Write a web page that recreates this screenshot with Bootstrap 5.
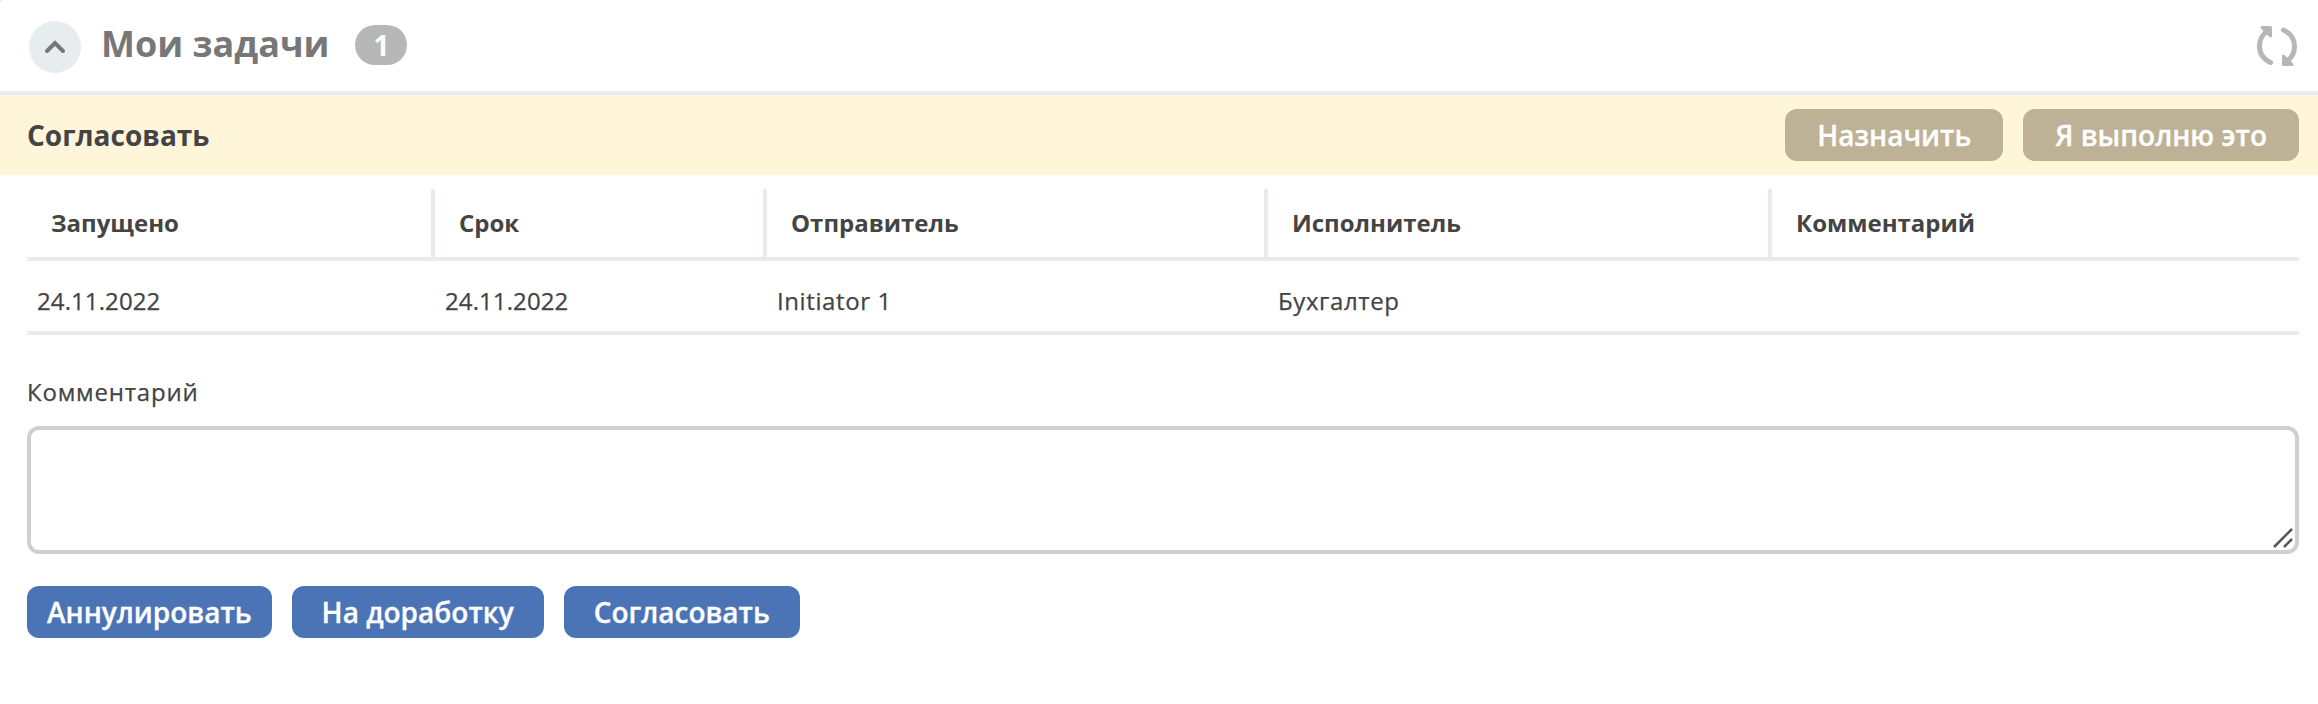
<!DOCTYPE html>
<html lang="ru">
<head>
<meta charset="utf-8">
<meta name="viewport" content="width=device-width, initial-scale=1">
<title>Мои задачи</title>
<link rel="stylesheet" href="https://cdn.jsdelivr.net/npm/bootstrap@5.3.0/dist/css/bootstrap.min.css">
<style>
  body { font-family: "Open Sans", "Noto Sans", sans-serif; font-size: 24px; line-height: 36px; color: #444; background: #fff; overflow: hidden; }
  .panel-head { height: 95px; padding: 0 19px 4px 29px; border-bottom: 4px solid #e7ecef; background: radial-gradient(circle at 4px 4px, #fff 4px, #ddd 5px) 0 0 / 4px 4px no-repeat; }
  .toggle-btn { width: 52px; height: 52px; background: #e7edef; margin-top: 7px; }
  .panel-title { font-size: 36px; line-height: 48px; color: #777; margin: 0 0 0 20px; }
  .count-pill { width: 52px; height: 40px; font-size: 28px; line-height: 41px; background: #b7b7b7; margin: 3px 0 0 26px; padding: 0; }
  .refresh { margin-top: 5px; }
  .task-bar { height: 80px; padding: 0 19px 0 27px; background: #fff5d9; }
  .task-name { font-size: 28px; }
  .act { height: 52px; padding: 1px 30px 0; border: 0; border-radius: 12px; font-size: 28px; line-height: 51px; font-weight: 600; color: #fff; white-space: nowrap; -webkit-text-stroke: .3px #fff; }
  .act-sand { background: #bdb295; padding: 1px 32px 0; }
  .act-blue { background: #4b74b7; }
  .panel-body { padding: 14px 19px 0 27px; }
  .task-table { table-layout: fixed; margin: 0; color: #444; border-collapse: separate; border-spacing: 0; }
  .task-table th { height: 72px; padding: 0 24px 0; font-weight: 700; border: 0 solid #e7edef; border-width: 0 4px 4px 0; vertical-align: middle; color: #444; }
  .task-table th:last-child { border-right: 0; }
  .task-table td { height: 74px; padding: 9px 10px 0; border: 0 solid #e7edef; border-bottom-width: 4px; vertical-align: middle; color: #444; letter-spacing: .6px; -webkit-text-stroke: .25px #444; }
  .task-table td.date { letter-spacing: .1px; }
  .note-label { margin: 39px 0 0; height: 52px; letter-spacing: .8px; -webkit-text-stroke: .25px #444; }
  .note-box { height: 128px; border: 4px solid #cfcfcf; border-radius: 12px; resize: none; }
  .grip { right: 6px; bottom: 6px; }
</style>
</head>
<body>
<header class="panel-head d-flex align-items-center">
  <button class="toggle-btn btn rounded-circle border-0 p-0 d-flex" aria-label="Свернуть">
    <svg width="52" height="52" viewBox="0 0 52 52" fill="none" stroke="#777" stroke-width="4" stroke-linecap="round"><path d="M18 30l8-8 8 8"/></svg>
  </button>
  <h1 class="panel-title fw-bold">Мои задачи</h1>
  <span class="count-pill badge rounded-pill fw-bold">1</span>
  <svg class="refresh ms-auto" width="44" height="44" viewBox="0 0 44 44" fill="none" stroke="#b7b7b7" stroke-linecap="round" stroke-linejoin="round"><path stroke-width="5" d="M15.500 38.500C8 35 4.500 28.500 4.500 22C4.500 15 8 10 12.500 7M28.500 6C35 9 39.500 15 39.500 22.500C39.500 29 36 34.500 31.500 37.500"/><path fill="#b7b7b7" stroke-width="3" d="M7 3.500H15.500V12ZM28.500 32V40.500H37Z"/></svg>
</header>
<section class="task-bar d-flex align-items-center justify-content-between">
  <span class="task-name fw-bold">Согласовать</span>
  <div class="d-flex" style="gap:20px">
    <button class="act act-sand btn">Назначить</button>
    <button class="act act-sand btn">Я выполню это</button>
  </div>
</section>
<main class="panel-body">
  <table class="task-table table">
    <colgroup><col style="width:408px"><col style="width:332px"><col style="width:501px"><col style="width:504px"><col></colgroup>
    <thead><tr><th>Запущено</th><th>Срок</th><th>Отправитель</th><th>Исполнитель</th><th>Комментарий</th></tr></thead>
    <tbody><tr><td class="date">24.11.2022</td><td class="date">24.11.2022</td><td>Initiator 1</td><td>Бухгалтер</td><td></td></tr></tbody>
  </table>
  <label class="note-label d-block" for="note">Комментарий</label>
  <div class="position-relative">
    <textarea id="note" class="note-box form-control"></textarea>
    <svg class="grip position-absolute" width="20" height="20" viewBox="0 0 20 20"><path d="M1 19L19 1M11 19L19 11" stroke="#555" stroke-width="2.500"/></svg>
  </div>
  <div class="d-flex" style="gap:20px;margin-top:32px">
    <button class="act act-blue btn" style="padding:1px 20px 0">Аннулировать</button>
    <button class="act act-blue btn">На доработку</button>
    <button class="act act-blue btn">Согласовать</button>
  </div>
</main>
<script src="https://cdn.jsdelivr.net/npm/bootstrap@5.3.0/dist/js/bootstrap.bundle.min.js"></script>
</body>
</html>
